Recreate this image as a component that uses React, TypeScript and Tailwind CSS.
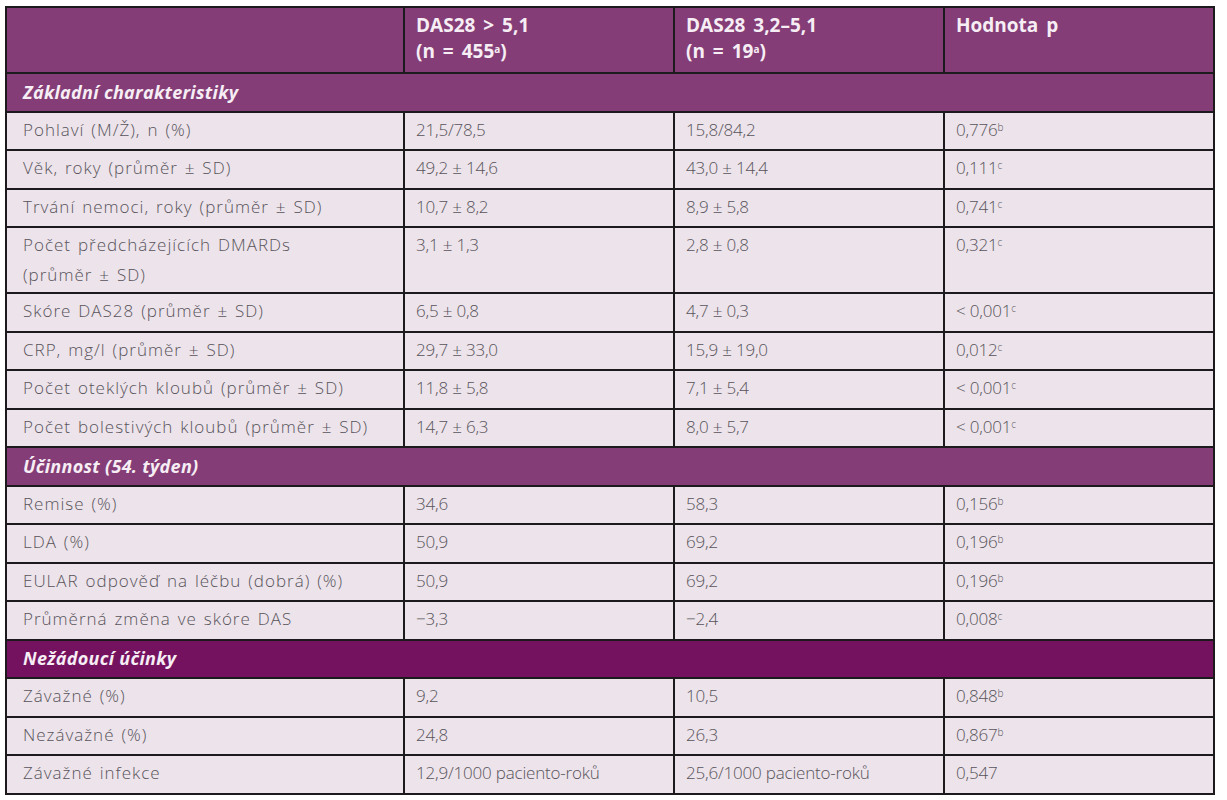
const sections = [
  {
    title: "Základní charakteristiky",
    dark: false,
    rows: [
      ["Pohlaví (M/Ž), n (%)", "21,5/78,5", "15,8/84,2", "0,776", "b"],
      ["Věk, roky (průměr ± SD)", "49,2 ± 14,6", "43,0 ± 14,4", "0,111", "c"],
      ["Trvání nemoci, roky (průměr ± SD)", "10,7 ± 8,2", "8,9 ± 5,8", "0,741", "c"],
      ["Počet předcházejících DMARDs\n(průměr ± SD)", "3,1 ± 1,3", "2,8 ± 0,8", "0,321", "c"],
      ["Skóre DAS28 (průměr ± SD)", "6,5 ± 0,8", "4,7 ± 0,3", "< 0,001", "c"],
      ["CRP, mg/l (průměr ± SD)", "29,7 ± 33,0", "15,9 ± 19,0", "0,012", "c"],
      ["Počet oteklých kloubů (průměr ± SD)", "11,8 ± 5,8", "7,1 ± 5,4", "< 0,001", "c"],
      ["Počet bolestivých kloubů (průměr ± SD)", "14,7 ± 6,3", "8,0 ± 5,7", "< 0,001", "c"],
    ],
  },
  {
    title: "Účinnost (54. týden)",
    dark: false,
    rows: [
      ["Remise (%)", "34,6", "58,3", "0,156", "b"],
      ["LDA (%)", "50,9", "69,2", "0,196", "b"],
      ["EULAR odpověď na léčbu (dobrá) (%)", "50,9", "69,2", "0,196", "b"],
      ["Průměrná změna ve skóre DAS", "−3,3", "−2,4", "0,008", "c"],
    ],
  },
  {
    title: "Nežádoucí účinky",
    dark: true,
    rows: [
      ["Závažné (%)", "9,2", "10,5", "0,848", "b"],
      ["Nezávažné (%)", "24,8", "26,3", "0,867", "b"],
      ["Závažné infekce", "12,9/1000 paciento-roků", "25,6/1000 paciento-roků", "0,547", ""],
    ],
  },
];

const font = { fontFamily: '"Open Sans", "Liberation Sans", sans-serif' };

export default function App() {
  return (
    <div className="min-h-[800px] bg-white pl-[5px] pt-[6px]" style={font}>
      <table className="w-[1208px] table-fixed border-collapse border-2 border-[#1c1a1c] text-[17px] font-light text-[#58545a]">
        <colgroup>
          <col className="w-[398px]" />
          <col className="w-[270px]" />
          <col className="w-[270px]" />
          <col className="w-[270px]" />
        </colgroup>
        <thead>
          <tr className="h-[66px] bg-[#843d76] align-top text-[19px] font-bold leading-[26px] text-[#f6eef4] [word-spacing:3px]">
            <th className="border-2 border-[#1c1a1c]" />
            <th className="border-2 border-[#1c1a1c] px-[11px] pt-[4px] text-left">
              DAS28 &gt; 5,1
              <br />
              (n = 455<sup className="text-[10px]">a</sup>)
            </th>
            <th className="border-2 border-[#1c1a1c] px-[11px] pt-[4px] text-left">
              DAS28 3,2–5,1
              <br />
              (n = 19<sup className="text-[10px]">a</sup>)
            </th>
            <th className="border-2 border-[#1c1a1c] px-[11px] pt-[4px] text-left">Hodnota p</th>
          </tr>
        </thead>
        <tbody>
          {sections.map((s) => (
            <Section key={s.title} title={s.title} dark={s.dark} rows={s.rows} />
          ))}
        </tbody>
      </table>
    </div>
  );
}

function Section({ title, dark, rows }: { title: string; dark: boolean; rows: string[][] }) {
  return (
    <>
      <tr className={dark ? "h-[38.5px] bg-[#74125f]" : "h-[38.5px] bg-[#843d76]"}>
        <td colSpan={4} className="border-2 border-[#1c1a1c] px-[16px] py-0 text-[18px] font-bold italic tracking-[0.3px] text-[#f6eef4]">
          {title}
        </td>
      </tr>
      {rows.map((r) => (
        <tr key={r[0]} className="h-[38.5px] bg-[#ece3eb] align-top leading-[30px]">
          <td className="whitespace-pre-line border-2 border-[#1c1a1c] px-[16px] py-[2px] tracking-[1px] [word-spacing:1.5px]">
            {r[0]}
          </td>
          <td className="border-2 border-[#1c1a1c] px-[11px] py-[2px] tracking-[-0.2px]">{r[1]}</td>
          <td className="border-2 border-[#1c1a1c] px-[11px] py-[2px] tracking-[-0.2px]">{r[2]}</td>
          <td className="border-2 border-[#1c1a1c] px-[11px] py-[2px] tracking-[-0.2px]">
            {r[3]}
            {r[4] && <sup className="text-[10px]">{r[4]}</sup>}
          </td>
        </tr>
      ))}
    </>
  );
}
